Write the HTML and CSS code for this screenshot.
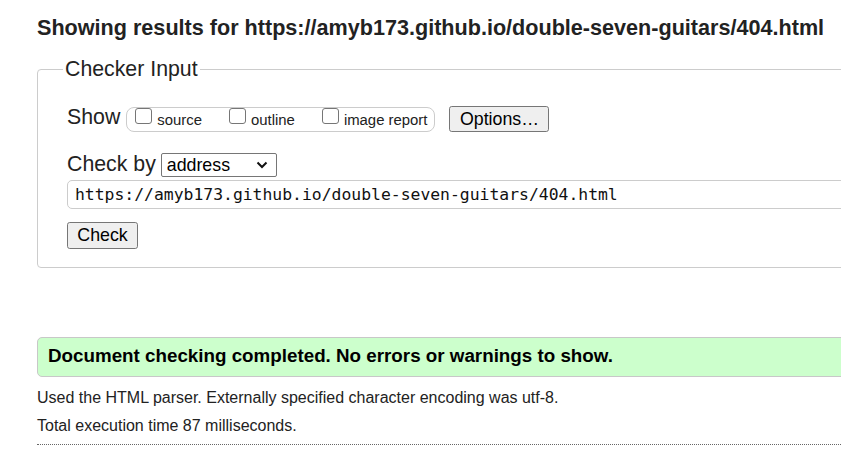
FILE: index.html
```html
<!DOCTYPE html>
<html lang="en">
<head>
<meta charset="utf-8">
<title>Nu Html Checker</title>
<link rel="stylesheet" href="styles.css">
</head>
<body>
<main class="page">
  <h2 class="title">Showing results for https://amyb173.github.io/double-seven-guitars/404.html</h2>
  <form class="checker">
    <fieldset class="fs">
      <legend class="legend">Checker Input</legend>
      <div class="row row-show">
        <span class="label">Show</span>
        <div class="group">
          <label class="opt"><input type="checkbox" class="cb"><span class="opt-text">source</span></label>
          <label class="opt"><input type="checkbox" class="cb"><span class="opt-text">outline</span></label>
          <label class="opt"><input type="checkbox" class="cb"><span class="opt-text">image report</span></label>
        </div>
        <button type="button" class="btn btn-options">Options…</button>
      </div>
      <div class="row row-by">
        <span class="label">Check by</span>
        <span class="select-wrap">
          <select class="select"><option>address</option></select>
          <svg class="chev" width="12" height="8" viewBox="0 0 12 8"><path d="M1.5 1.5 L6 6 L10.5 1.5" fill="none" stroke="#111" stroke-width="2"/></svg>
        </span>
      </div>
      <input class="url" type="text" value="https://amyb173.github.io/double-seven-guitars/404.html">
      <button type="button" class="btn btn-check">Check</button>
    </fieldset>
  </form>
  <p class="success">Document checking completed. No errors or warnings to show.</p>
  <p class="info">Used the HTML parser. Externally specified character encoding was utf-8.</p>
  <p class="info">Total execution time 87 milliseconds.</p>
  <hr class="sep">
</main>
</body>
</html>
```
FILE: styles.css
```css
html, body {
  margin: 0;
  padding: 0;
  overflow: hidden;
  background: #fff;
}
body {
  font-family: "Liberation Sans", Arial, sans-serif;
  color: #222;
}
.page {
  width: 1100px;
  padding-left: 37px;
  display: flex;
  flex-direction: column;
  align-items: stretch;
}
.title {
  margin: 15px 0 0;
  font-size: 21.6px;
  line-height: 25px;
  font-weight: bold;
  color: #222;
}
.checker {
  margin: 17.4px 0 0;
}
.fs {
  margin: 0;
  border: 1px solid #ccc;
  border-radius: 4px;
  padding: 0 0 17.5px 29px;
  min-width: 0;
}
.legend {
  font-size: 21.3px;
  line-height: 24.5px;
  padding: 0 2px;
  margin-left: -4px;
  color: #222;
}
.row {
  display: flex;
  align-items: flex-start;
}
.row-show {
  margin-top: 23.1px;
  height: 27px;
}
.label {
  font-size: 21.3px;
  line-height: 24.5px;
}
.group {
  margin: 2px 0 0 6px;
  height: 23px;
  border: 1px solid #ccc;
  border-radius: 8px;
  padding: 0 7px 0 8px;
  display: flex;
  align-items: flex-start;
  gap: 27px;
}
.opt {
  display: flex;
  align-items: flex-start;
  gap: 5px;
}
.cb {
  appearance: none;
  -webkit-appearance: none;
  margin: 0;
  width: 17px;
  height: 16px;
  border: 1.3px solid #767676;
  border-radius: 3px;
  background: #fff;
  box-sizing: border-box;
}
.opt-text {
  font-size: 14.9px;
  line-height: 17px;
  margin-top: 4px;
}
.btn {
  font-family: "Liberation Sans", Arial, sans-serif;
  font-size: 17.8px;
  line-height: 20.5px;
  color: #000;
  background: #efefef;
  border: 1px solid #767676;
  border-radius: 2.7px;
  padding: 0;
  box-sizing: border-box;
}
.btn-options {
  margin: 1px 0 0 14px;
  width: 100px;
  height: 26px;
}
.row-by {
  margin-top: 19.7px;
}
.select-wrap {
  position: relative;
  margin: 1.6px 0 0 5px;
  display: block;
  height: 23.4px;
}
.select {
  appearance: none;
  -webkit-appearance: none;
  display: block;
  width: 116px;
  height: 23.4px;
  box-sizing: border-box;
  border: 1px solid #767676;
  border-radius: 2px;
  background: #fff;
  font-family: "Liberation Sans", Arial, sans-serif;
  font-size: 17.8px;
  line-height: 20.5px;
  color: #000;
  padding: 0 0 0 5px;
  margin: 0;
}
.chev {
  position: absolute;
  left: 95px;
  top: 8px;
  pointer-events: none;
}
.url {
  display: block;
  margin: 3.6px 0 0;
  width: 100%;
  height: 29px;
  box-sizing: border-box;
  border: 1px solid #ccc;
  border-radius: 5px;
  padding: 0 0 0 7px;
  font-family: "DejaVu Sans Mono", "Liberation Mono", monospace;
  font-size: 16.4px;
  color: #111;
  background: #fff;
  outline: none;
}
.btn-check {
  display: block;
  margin-top: 12.7px;
  width: 71px;
  height: 27.5px;
}
.success {
  margin: 69.3px 0 0;
  height: 39.4px;
  box-sizing: border-box;
  background: #ccffcc;
  border: 1px solid #c8c8c8;
  border-radius: 5px;
  padding: 6.4px 10px 0;
  font-size: 18.8px;
  line-height: 21.6px;
  font-weight: bold;
  color: #000;
}
.info {
  margin: 0;
  font-size: 16px;
  line-height: 28px;
  color: #222;
}
.success + .info {
  margin-top: 7px;
}
.sep {
  margin: 4.3px 0 0;
  border: 0;
  border-top: 1px dotted #666;
  height: 0;
}
```
